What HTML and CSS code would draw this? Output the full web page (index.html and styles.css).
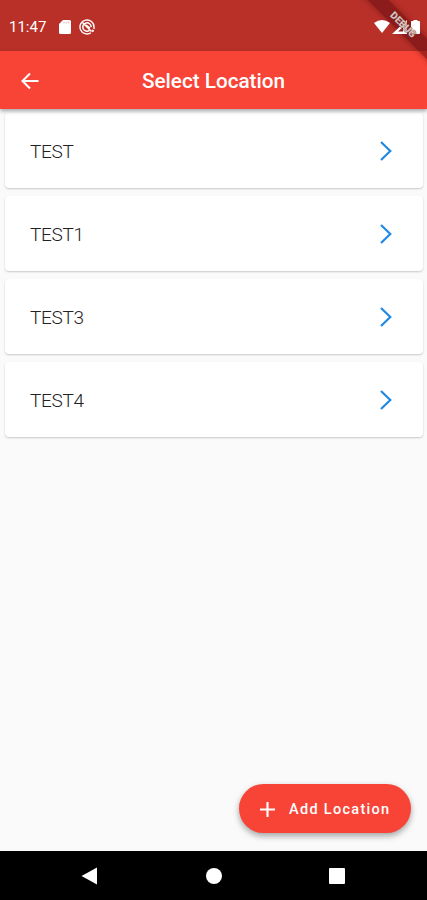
FILE: index.html
```html
<!DOCTYPE html>
<html lang="en">
<head>
<meta charset="utf-8">
<title>Select Location</title>
<link rel="stylesheet" href="styles.css">
</head>
<body>
<div class="screen">
  <header class="status-bar">
    <span class="clock">11:47</span>
    <svg class="sd-icon" viewBox="0 0 12 14"><path fill="#fff" d="M4 0h6.500a1.500 1.500 0 0 1 1.500 1.500v11a1.500 1.500 0 0 1-1.500 1.500h-9A1.500 1.500 0 0 1 0 12.500V4z"/><path stroke="#d98a85" stroke-width=".7" d="M5 1.800v1.600M7.200 1.800v1.600M9.400 1.800v1.600"/></svg>
    <svg class="sync-icon" viewBox="0 0 16 16" fill="none" stroke="#fff"><path stroke-width="1.400" d="M12 13.700A7 7 0 1 1 15 8v2"/><path stroke-width="1.500" d="M10.500 11.400A4.200 4.200 0 1 1 12.200 8"/><path stroke-width="1.500" d="M3.500 3.500l9 9M7 6l4 3"/><circle cx="13.800" cy="11.800" r=".8" fill="#fff"/></svg>
    <div class="signals">
      <svg class="wifi-icon" viewBox="0 0 16 13"><path fill="#fff" d="M0 3Q8-3 16 3L8 13z"/></svg>
      <svg class="cell-icon" viewBox="0 0 15 14"><path fill="#fff" fill-rule="evenodd" d="M0 14L15 0v14zM6 11.500h5V7z"/></svg>
      <svg class="battery-icon" viewBox="0 0 9 14"><path fill="#fff" d="M2.500 0h4v1H8a1 1 0 0 1 1 1v11a1 1 0 0 1-1 1H1a1 1 0 0 1-1-1V2a1 1 0 0 1 1-1h1.500z"/></svg>
    </div>
  </header>
  <div class="app-bar">
    <svg class="back-icon" viewBox="0 0 18 18"><path fill="none" stroke="#fff" stroke-width="2" d="M17.500 9H2M9 1.500L1.500 9L9 16.500"/></svg>
    <h1>Select Location</h1>
  </div>
  <main class="list">
    <div class="card"><span>TEST</span><svg class="chevron" viewBox="0 0 12 20"><path d="M1 1l9.300 9L1 19"/></svg></div>
    <div class="card"><span>TEST1</span><svg class="chevron" viewBox="0 0 12 20"><path d="M1 1l9.300 9L1 19"/></svg></div>
    <div class="card"><span>TEST3</span><svg class="chevron" viewBox="0 0 12 20"><path d="M1 1l9.300 9L1 19"/></svg></div>
    <div class="card"><span>TEST4</span><svg class="chevron" viewBox="0 0 12 20"><path d="M1 1l9.300 9L1 19"/></svg></div>
  </main>
  <button class="fab">
    <svg class="plus" viewBox="0 0 14 14"><path stroke="#fff" stroke-width="2" d="M7 0v14M0 7h14"/></svg>
    <span>Add Location</span>
  </button>
  <nav class="nav-bar">
    <svg viewBox="0 0 18 18"><path fill="#fff" d="M.5 9L16 .5v17z"/></svg>
    <svg viewBox="0 0 18 18"><circle cx="9" cy="9" r="8" fill="#fff"/></svg>
    <svg viewBox="0 0 18 18"><rect x="1" y="1" width="16" height="16" rx="1" fill="#fff"/></svg>
  </nav>
  <div class="debug-corner"><div class="debug-band"></div></div>
  <div class="debug-corner debug-top"><div class="debug-label">DEBUG</div></div>
</div>
</body>
</html>
```
FILE: styles.css
```css
* { box-sizing: border-box; }
body { margin: 0; font-family: Roboto, "Liberation Sans", sans-serif; }
svg { display: block; flex: none; }
.screen {
  position: relative;
  display: flex;
  flex-direction: column;
  width: 427px;
  height: 900px;
  overflow: hidden;
  background: #fafafa;
}
.status-bar {
  display: flex;
  align-items: center;
  height: 51px;
  flex: none;
  padding: 2px 7px 0 9px;
  background: #b93029;
  color: #fff;
}
.clock { width: 50px; font-size: 15px; line-height: 20px; font-weight: 400; white-space: nowrap; }
.sd-icon { width: 12px; height: 14px; }
.sync-icon { width: 16px; height: 16px; margin-left: 8px; }
.signals { position: relative; z-index: 3; display: flex; align-items: center; margin-left: auto; }
.wifi-icon { width: 16px; height: 13px; }
.cell-icon { width: 15px; height: 14px; margin-left: 2px; }
.battery-icon { width: 9px; height: 14px; margin-left: 4px; }
.app-bar {
  position: relative;
  z-index: 1;
  display: grid;
  grid-template-columns: 1fr auto 1fr;
  align-items: center;
  height: 58px;
  flex: none;
  padding: 1px 21px 0;
  background: #f74436;
  color: #fff;
  box-shadow: 0 2px 4px rgba(0, 0, 0, .35);
}
.back-icon { width: 18px; height: 18px; }
.app-bar h1 { margin: 0; font-size: 20.700px; line-height: 24px; font-weight: 500; }
.list {
  display: flex;
  flex-direction: column;
  flex: 1;
  gap: 8px;
  padding: 4px 4px 0 5px;
}
.card {
  display: flex;
  align-items: center;
  justify-content: space-between;
  height: 75px;
  padding: 0 31px 0 25px;
  border-radius: 4px;
  background: #fff;
  box-shadow: 0 1px 2px rgba(0, 0, 0, .2);
  color: #222;
  font-size: 19px;
  font-weight: 300;
  letter-spacing: -.300px;
}
.card span { padding-top: 1px; }
.chevron { width: 12px; height: 20px; }
.chevron path { fill: none; stroke: #2189e5; stroke-width: 2.200; }
.fab {
  display: flex;
  align-items: center;
  align-self: flex-end;
  flex: none;
  width: 172px;
  height: 49px;
  margin: 0 16px 18px 0;
  padding: 1px 0 0 21px;
  border: 0;
  border-radius: 25px;
  background: #f74436;
  box-shadow: 0 3px 6px rgba(0, 0, 0, .35);
  color: #fff;
  font: 500 14.500px/20px Roboto, "Liberation Sans", sans-serif;
  letter-spacing: 1.300px;
  white-space: nowrap;
}
.fab span { padding-top: 1px; }
.plus { width: 15px; height: 15px; margin-right: 14px; }
.nav-bar {
  display: flex;
  align-items: center;
  justify-content: space-between;
  flex: none;
  height: 49px;
  padding: 0 81px;
  background: #000;
}
.nav-bar svg { width: 18px; height: 18px; }
.debug-corner {
  position: absolute;
  z-index: 2;
  top: 0;
  right: 0;
  width: 70px;
  height: 70px;
  overflow: hidden;
}
.debug-top { z-index: 4; }
.debug-band,
.debug-label {
  position: absolute;
  top: 18px;
  left: -14px;
  width: 120px;
  height: 14px;
  transform: rotate(45deg);
}
.debug-band {
  background: rgba(110, 15, 18, .6);
  box-shadow: 0 0 6px rgba(70, 0, 0, .45);
}
.debug-label {
  color: #d9c0bd;
  font-size: 10px;
  font-weight: 900;
  line-height: 14px;
  text-align: center;
  text-shadow: 0 0 1px #6b2a2a, 0 0 1px #6b2a2a;
}
```
